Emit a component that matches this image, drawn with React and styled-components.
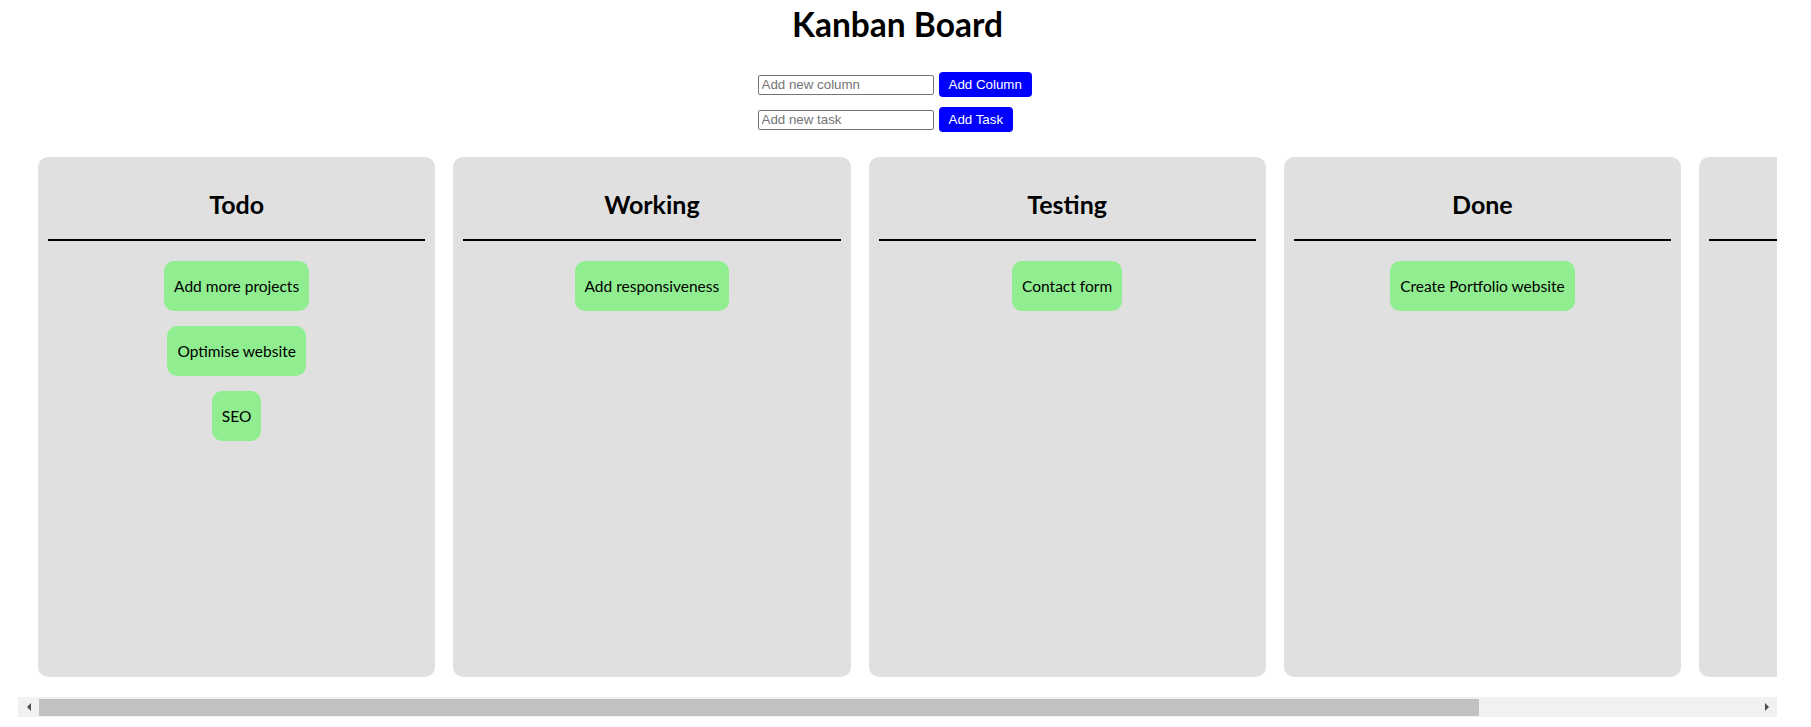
import React, { useLayoutEffect, useRef, useState } from "react";
import styled, { createGlobalStyle } from "styled-components";

const GlobalStyle = createGlobalStyle`
    html, body {
        margin: 0;
        padding: 0;
        background: #ffffff;
    }

    body {
        font-family: "Lato", "Noto Sans", sans-serif;
        color: #000000;
    }
`;

const Page = styled.div`
    width: 1759px;
    margin-left: 18px;
`;

const Title = styled.h1`
    margin: 0;
    padding-top: 4px;
    font-size: 33.5px;
    line-height: 40px;
    font-weight: 700;
    text-align: center;
`;

const Controls = styled.div`
    width: 280px;
    margin: 28px auto 0;
    display: flex;
    flex-direction: column;
    align-items: flex-start;
    gap: 10px;
`;

const Row = styled.form`
    display: flex;
    align-items: center;
    gap: 5px;
    margin: 0;
`;

const Input = styled.input`
    box-sizing: border-box;
    width: 176px;
    height: 20px;
    padding: 1px 3px;
    border: 1px solid #767676;
    border-radius: 2px;
    font-family: "Liberation Sans", Arial, sans-serif;
    font-size: 13.33px;
    color: #000000;

    &::placeholder {
        color: #757575;
    }
`;

const Button = styled.button`
    box-sizing: border-box;
    height: 25px;
    padding: 0 10px;
    border: none;
    border-radius: 4px;
    background: #0000ff;
    color: #ffffff;
    font-family: "Liberation Sans", Arial, sans-serif;
    font-size: 13.33px;
    cursor: pointer;
`;

const BoardWrap = styled.div`
    margin-top: 5px;
`;

const Board = styled.div`
    display: flex;
    gap: 18px;
    padding: 20px;
    overflow-x: auto;
    overflow-y: hidden;
    scrollbar-width: none;
`;

const ScrollBar = styled.div`
    display: flex;
    height: 20px;
    background: #f1f1f1;
`;

const ScrollArrow = styled.button`
    flex: 0 0 21px;
    display: flex;
    align-items: center;
    justify-content: center;
    padding: 0;
    border: none;
    background: transparent;
    cursor: default;

    &::before {
        content: "";
        width: 0;
        height: 0;
        border-top: 4px solid transparent;
        border-bottom: 4px solid transparent;
        ${(props) =>
            props.dir == "left"
                ? "border-right: 4px solid #505050;"
                : "border-left: 4px solid #505050;"}
    }
`;

const Track = styled.div`
    flex: 1;
    display: flex;
    align-items: flex-start;
`;

const Thumb = styled.div`
    height: 17px;
    margin-top: 2px;
    background: #c1c1c1;
`;

const Column = styled.section`
    flex: 0 0 397.25px;
    box-sizing: border-box;
    height: 520px;
    padding: 0 10px;
    background: #e0e0e0;
    border-radius: 10px;
`;

const ColumnTitle = styled.h2`
    margin: 0;
    padding: 32px 0 20px;
    min-height: 30px;
    font-size: 25px;
    line-height: 30px;
    font-weight: 700;
    text-align: center;
    border-bottom: 2px solid #000000;
`;

const Tasks = styled.div`
    margin-top: 20px;
    display: flex;
    flex-direction: column;
    align-items: center;
    gap: 15px;
`;

const Task = styled.div`
    padding: 15px 10px;
    background: #90ee90;
    border-radius: 10px;
    font-size: 15.5px;
    line-height: 20px;
    cursor: grab;
`;

const initialColumns = [
    { id: 1, name: "Todo", tasks: ["Add more projects", "Optimise website", "SEO"] },
    { id: 2, name: "Working", tasks: ["Add responsiveness"] },
    { id: 3, name: "Testing", tasks: ["Contact form"] },
    { id: 4, name: "Done", tasks: ["Create Portfolio website"] },
    { id: 5, name: "", tasks: [] },
];

const TRACK = 1759 - 42;

const App = () => {
    const [columns, setColumns] = useState(initialColumns);
    const [newColumn, setNewColumn] = useState("");
    const [newTask, setNewTask] = useState("");
    const [thumb, setThumb] = useState({ width: TRACK, left: 0 });
    const boardRef = useRef(null);

    const measure = () => {
        const el = boardRef.current;
        if (!el) return;
        const ratio = el.clientWidth / el.scrollWidth;
        const max = el.scrollWidth - el.clientWidth;
        const width = TRACK * ratio;
        const left = max > 0 ? (el.scrollLeft / max) * (TRACK - width) : 0;
        setThumb({ width, left });
    };

    useLayoutEffect(measure, [columns]);

    const scrollBy = (dx) => {
        if (boardRef.current) boardRef.current.scrollLeft += dx;
    };

    const addColumn = (e) => {
        e.preventDefault();
        if (newColumn.trim() == "") return;
        setColumns([...columns, { id: Date.now(), name: newColumn.trim(), tasks: [] }]);
        setNewColumn("");
    };

    const addTask = (e) => {
        e.preventDefault();
        if (newTask.trim() == "") return;
        const next = columns.map((col, i) =>
            i == 0 ? { ...col, tasks: [...col.tasks, newTask.trim()] } : col
        );
        setColumns(next);
        setNewTask("");
    };

    return (
        <Page>
            <GlobalStyle />
            <Title>Kanban Board</Title>
            <Controls>
                <Row onSubmit={addColumn}>
                    <Input
                        placeholder="Add new column"
                        value={newColumn}
                        onChange={(e) => setNewColumn(e.target.value)}
                    />
                    <Button type="submit">Add Column</Button>
                </Row>
                <Row onSubmit={addTask}>
                    <Input
                        placeholder="Add new task"
                        value={newTask}
                        onChange={(e) => setNewTask(e.target.value)}
                    />
                    <Button type="submit">Add Task</Button>
                </Row>
            </Controls>
            <BoardWrap>
                <Board ref={boardRef} onScroll={measure}>
                    {columns.map((col) => (
                        <Column key={col.id}>
                            <ColumnTitle>{col.name}</ColumnTitle>
                            <Tasks>
                                {col.tasks.map((task) => (
                                    <Task key={task}>{task}</Task>
                                ))}
                            </Tasks>
                        </Column>
                    ))}
                </Board>
                <ScrollBar>
                    <ScrollArrow dir="left" aria-label="Scroll left" onClick={() => scrollBy(-40)} />
                    <Track>
                        <Thumb style={{ width: thumb.width, marginLeft: thumb.left }} />
                    </Track>
                    <ScrollArrow dir="right" aria-label="Scroll right" onClick={() => scrollBy(40)} />
                </ScrollBar>
            </BoardWrap>
        </Page>
    );
};

export default App;
